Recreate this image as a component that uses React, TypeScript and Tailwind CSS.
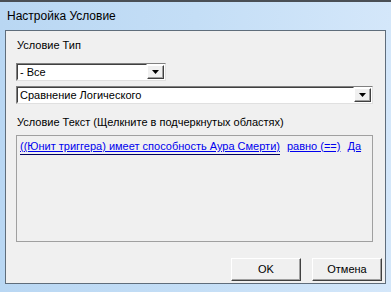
const Arrow = () => (
  <div className="flex h-full w-[17px] items-center justify-center border border-t-white border-l-white border-r-[#404040] border-b-[#404040] bg-[#f0f0f0] shadow-[inset_-1px_-1px_0_#a0a0a0]">
    <svg width="7" height="4" viewBox="0 0 7 4">
      <path d="M0 0 H7 L3.5 4 Z" fill="#000" />
    </svg>
  </div>
);

const Combo = ({ text, width }: { text: string; width: string }) => (
  <div className={`${width} flex h-[18px] items-stretch border border-t-[#808080] border-l-[#808080] border-r-[#e0e0e0] border-b-[#e0e0e0] bg-white`}>
    <div className="flex flex-1 items-center border border-t-[#404040] border-l-[#404040] border-r-transparent border-b-transparent pl-[2px] text-[11px] leading-none text-black">
      {text}
    </div>
    <div className="py-px pr-px">
      <Arrow />
    </div>
  </div>
);

const Btn = ({ label }: { label: string }) => (
  <button className="flex h-[23px] w-[70px] items-center justify-center border border-t-white border-l-white border-r-[#404040] border-b-[#404040] bg-[#f0f0f0] text-[11px] text-black shadow-[inset_-1px_-1px_0_#a0a0a0]">
    {label}
  </button>
);

export default function App() {
  return (
    <div className="flex h-[292px] w-[391px] flex-col overflow-hidden border-t-2 border-[#4a4f55] bg-gradient-to-r from-[#b9d7f3] via-[#c4def6] to-[#d4e7fa] font-['Liberation_Sans',sans-serif]">
      <div className="flex h-[28px] items-center pl-[7px] text-[12px] text-black">Настройка Условие</div>
      <div className="mx-[5px] flex h-[254px] flex-col border border-[#5f6d7b] bg-[#f0f0f0] px-[10px] pt-[8px] text-[11px] leading-[13px] text-black">
        <div className="pl-px">Условие Тип</div>
        <div className="mt-[11px]">
          <Combo text="- Все" width="w-[150px]" />
        </div>
        <div className="mt-[5px]">
          <Combo text="Сравнение Логического" width="w-[357px]" />
        </div>
        <div className="mt-[12px] pl-px">Условие Текст (Щелкните в подчеркнутых областях)</div>
        <div className="mt-[6px] h-[107px] w-[357px] border border-[#a0a0a0] px-[3px] pt-[4px]">
          <div className="flex gap-[7px] text-[11px] text-[#0000ee]">
            <span className="border-b border-[#000060] pb-px underline">((Юнит триггера) имеет способность Аура Смерти)</span>
            <span className="underline">равно (==)</span>
            <span className="underline">Да</span>
          </div>
        </div>
        <div className="-mr-[7px] mt-[16px] flex justify-end gap-[11px]">
          <Btn label="OK" />
          <Btn label="Отмена" />
        </div>
      </div>
    </div>
  );
}
